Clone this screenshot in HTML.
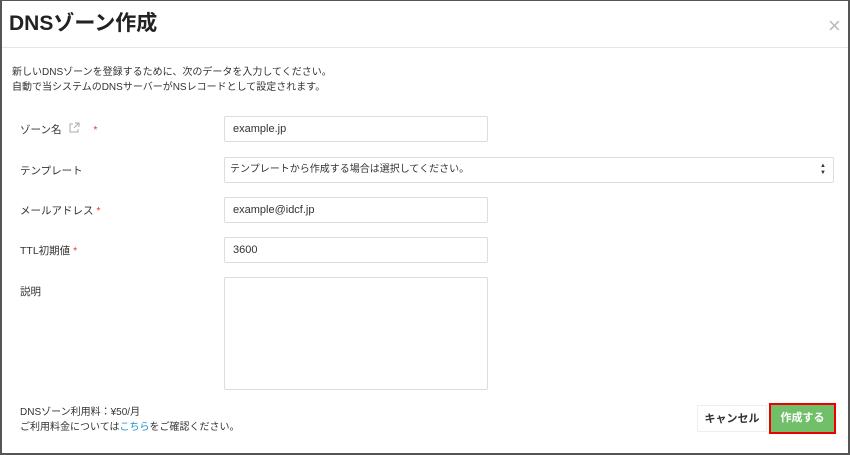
<!DOCTYPE html>
<html><head><meta charset="utf-8"><style>
*{box-sizing:border-box;margin:0;padding:0}
body{width:850px;height:455px;background:#fff;font-family:"Liberation Sans","Noto Sans CJK JP",sans-serif;color:#333;position:relative;overflow:hidden}
.frame{position:absolute;left:0;top:0;width:850px;height:455px;border-top:1px solid #555;border-left:2px solid #555;border-right:2px solid #555;border-bottom:2px solid #555}
.t{position:absolute;white-space:nowrap}
h1{position:absolute;left:9px;top:7px;font-size:21px;font-weight:bold;color:#222}
.hr{position:absolute;left:2px;right:2px;top:47px;height:1px;background:#e5e5e5}
.close{position:absolute;left:828px;top:13px;font-size:22px;color:#bbb;font-weight:300}
.p{font-size:10px;color:#333;line-height:15px}
.lbl{font-size:10.5px;color:#333}
.req{color:#e33}
.in{position:absolute;left:224px;width:264px;height:26px;border:1px solid #ddd;border-radius:2px;font-size:11px;padding:0 8px;line-height:24px;color:#333}
.btn{position:absolute;font-size:11px;font-weight:bold;text-align:center}
</style></head><body>
<div class="frame"></div>
<h1>DNSゾーン作成</h1>
<div class="close">×</div>
<div class="hr"></div>
<div class="t p" style="left:12px;top:65px">新しいDNSゾーンを登録するために、次のデータを入力してください。<br>自動で当システムのDNSサーバーがNSレコードとして設定されます。</div>

<div class="t lbl" style="left:20px;top:122px">ゾーン名 <svg width="12" height="12" viewBox="0 0 12 12" style="vertical-align:-1px;margin-left:4px"><path d="M5 2H2v8h8V7M7 1h4v4M11 1L6 6" fill="none" stroke="#aaa" stroke-width="1"/></svg> <span class="req" style="margin-left:10px">*</span></div>
<div class="in" style="top:116px">example.jp</div>

<div class="t lbl" style="left:20px;top:163px">テンプレート</div>
<div class="in" style="top:157px;width:610px;background:#fff;padding:0"><div style="position:absolute;left:5px;top:6px;font-size:10px;line-height:12px;white-space:nowrap">テンプレートから作成する場合は選択してください。</div><div style="position:absolute;right:7px;font-size:6px;line-height:7px;top:5px">▲<br>▼</div></div>

<div class="t lbl" style="left:20px;top:203px">メールアドレス <span class="req">*</span></div>
<div class="in" style="top:197px">example@idcf.jp</div>

<div class="t lbl" style="left:20px;top:243px">TTL初期値 <span class="req">*</span></div>
<div class="in" style="top:237px">3600</div>

<div class="t lbl" style="left:20px;top:284px">説明</div>
<div class="in" style="top:277px;height:113px"></div>

<div class="t p" style="left:20px;top:405px">DNSゾーン利用料：¥50/月<br>ご利用料金については<span style="color:#1a8fd0">こちら</span>をご確認ください。</div>

<div class="btn" style="left:697px;top:405px;width:70px;height:27px;line-height:27px;border:1px solid #eee;color:#333">キャンセル</div>
<div class="btn" style="left:769px;top:403px;width:67px;height:31px;line-height:27px;border:2px solid #e00;background:#72bf6a;color:#fff">作成する</div>
</body></html>
